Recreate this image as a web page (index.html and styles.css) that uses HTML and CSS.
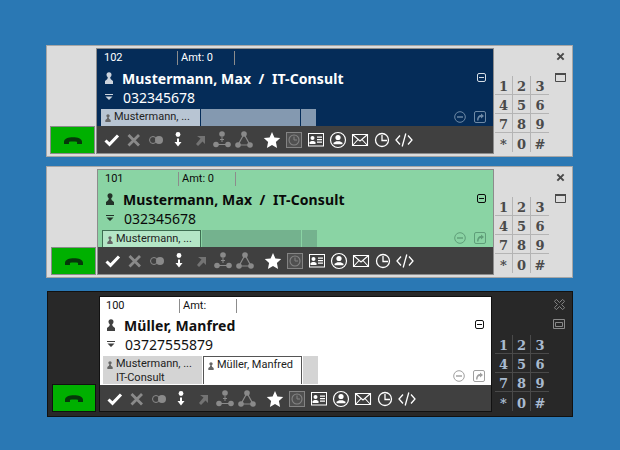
FILE: index.html
```html
<!DOCTYPE html>
<html lang="en">
<head>
    <meta charset="UTF-8">
    <meta name="viewport" content="width=device-width, initial-scale=1.0">
    <title>Call windows</title>
    <link rel="stylesheet" href="styles.css">
</head>
<body>
    <!-- icon sprite, used by all three call windows -->
    <svg class="sprite" aria-hidden="true">
        <symbol id="i-phone" viewBox="0 0 22 10"><path d="M1 6.500C1 3 6 1.500 11 1.500S21 3 21 6.500V9h-5.500V6.500c-1.500-.7-7.500-.7-9 0V9H1z"/></symbol>
        <symbol id="i-person" viewBox="0 0 8 12"><circle cx="4" cy="2.800" r="2.500"/><path d="M2.800 5h2.400l.4 2L8 9v3H0V9l2.400-2z"/></symbol>
        <symbol id="i-filter" viewBox="0 0 8 6"><path d="M0 0h8v1H0zM.5 2.500h7L4 6z"/></symbol>
        <symbol id="i-check" viewBox="0 0 22 22"><path d="M4.500 11.500l4 3.800L17 6.500" fill="none" stroke="currentColor" stroke-width="3"/></symbol>
        <symbol id="i-x" viewBox="0 0 22 22"><path d="M5.500 6l10.500 10.500M16 6L5.500 16.500" fill="none" stroke="currentColor" stroke-width="2.800"/></symbol>
        <symbol id="i-toggle" viewBox="0 0 22 22"><circle cx="8" cy="11" r="3.500" fill="none" stroke="currentColor"/><circle cx="14" cy="11" r="4"/></symbol>
        <symbol id="i-down" viewBox="0 0 22 22"><circle cx="11" cy="5.500" r="2.400"/><path d="M10 9.500h2v3.500h2.500L11 17.500 7.500 13H10z"/></symbol>
        <symbol id="i-arrow" viewBox="0 0 22 22"><path d="M8 7h8v8l-2.500-2.500L9 17l-2-2 4.500-5.500z"/></symbol>
        <symbol id="i-merge" viewBox="0 0 22 22"><circle cx="11" cy="5" r="2.800"/><circle cx="5" cy="15.500" r="2.800"/><circle cx="17" cy="15.500" r="2.800"/><path d="M5 15h12v1H5zM10.500 8h1v2H13v1h-1.500v2h-1v-2H9v-1h1.500z"/></symbol>
        <symbol id="i-triangle" viewBox="0 0 22 22"><circle cx="11" cy="5" r="2.800"/><circle cx="5" cy="16" r="2.800"/><circle cx="17" cy="16" r="2.800"/><path d="M11 5L5 16h12z" fill="none" stroke="currentColor" stroke-width="1.200"/></symbol>
        <symbol id="i-star" viewBox="0 0 22 22"><path d="M11 3l2.400 5.400 5.800.7-4.300 4 1.200 5.900-5.100-2.900L5.900 19l1.200-5.900-4.300-4 5.800-.7z"/></symbol>
        <symbol id="i-clockbox" viewBox="0 0 22 22"><rect x="3.500" y="3.500" width="15" height="15" fill="#505050" stroke="#848484"/><circle cx="11" cy="11" r="5" fill="none" stroke="#848484" stroke-width="1.100"/><path d="M11 7.500V11h3" fill="none" stroke="#848484"/></symbol>
        <symbol id="i-card" viewBox="0 0 22 22"><rect x="3.500" y="4.500" width="15" height="12.500" fill="#404040" stroke="currentColor"/><circle cx="7.500" cy="9" r="2"/><path d="M4.500 15v-2l2-1h2l2 1v2zM12 7.500h5v1.200h-5zM12 10h5v1.200h-5zM12 12.500h5v1.200h-5z"/></symbol>
        <symbol id="i-user" viewBox="0 0 22 22"><circle cx="11" cy="11" r="7.500" fill="none" stroke="currentColor" stroke-width="1.200"/><circle cx="11" cy="8.500" r="2.600"/><path d="M6.500 15.200v-1.400l2.800-1.600h3.400l2.800 1.600v1.400z"/></symbol>
        <symbol id="i-mail" viewBox="0 0 22 22"><path d="M3.500 5.500h15v11h-15zM3.500 5.500L11 12l7.500-6.500M3.500 16.500L9 10.500M18.500 16.500L13 10.500" fill="none" stroke="currentColor" stroke-width="1.100"/></symbol>
        <symbol id="i-clock" viewBox="0 0 22 22"><circle cx="11" cy="11" r="6.500" fill="none" stroke="currentColor" stroke-width="1.300"/><path d="M11 6v5.500h5" fill="none" stroke="currentColor" stroke-width="1.300"/></symbol>
        <symbol id="i-code" viewBox="0 0 22 22"><path d="M7 6.500L3 11l4 4.500M15 6.500l4 4.500-4 4.500M12.800 4.500L9.200 17.500" fill="none" stroke="currentColor" stroke-width="1.300"/></symbol>
        <symbol id="i-collapse" viewBox="0 0 9 9"><rect x=".5" y=".5" width="8" height="8" rx="1.500" fill="none" stroke="currentColor"/><path d="M2 4h5v1H2z"/></symbol>
        <symbol id="i-remove" viewBox="0 0 12 12"><circle cx="6" cy="6" r="5.300" fill="none" stroke="currentColor"/><path d="M3 5.300h6v1.400H3z"/></symbol>
        <symbol id="i-forward" viewBox="0 0 12 12"><rect x=".5" y=".5" width="11" height="11" rx="1.500" fill="none" stroke="currentColor"/><path d="M7 2.500L10 5 7 7.500V6C5.500 6 4.500 7 4.500 9.500H3C3 6 4.500 4 7 4z"/></symbol>
        <symbol id="i-close" viewBox="0 0 10 10"><path d="M1.500 1.500l7 7M8.500 1.500l-7 7" fill="none" stroke="currentColor" stroke-width="2.200"/></symbol>
        <symbol id="i-close-outline" viewBox="0 0 14 14"><path d="M3 .5L7 4.500l4-4L13.500 3l-4 4 4 4-2.500 2.500-4-4-4 4L.5 11l4-4-4-4z" fill="none" stroke="currentColor" stroke-width="1.200"/></symbol>
        <symbol id="i-max" viewBox="0 0 11 9"><path d="M.5.500h10v8H.5z" fill="none" stroke="currentColor"/><path d="M0 0h11v2H0z"/></symbol>
        <symbol id="i-max-outline" viewBox="0 0 12 10"><path d="M.5.500h11v9H.5zM2.500 3.500h7v4h-7z" fill="none" stroke="currentColor"/></symbol>
    </svg>

    <section class="win win-blue">
        <div class="win-left">
            <button class="call"><svg><use href="#i-phone"/></svg></button>
        </div>
        <div class="panel">
            <div class="info">
                <div class="status"><span class="ext">102</span><span class="amt">Amt: 0</span></div>
                <div class="name-row">
                    <svg class="row-icon person"><use href="#i-person"/></svg>
                    <strong class="name">Mustermann, Max  /  IT-Consult</strong>
                    <svg class="collapse"><use href="#i-collapse"/></svg>
                </div>
                <div class="number-row">
                    <svg class="row-icon filter"><use href="#i-filter"/></svg>
                    <span class="number">032345678</span>
                </div>
                <div class="tabs">
                    <div class="tab active"><svg><use href="#i-person"/></svg><span>Mustermann, ...</span></div>
                    <div class="tab empty"></div>
                    <div class="tab stub"></div>
                    <svg class="tab-action remove"><use href="#i-remove"/></svg>
                    <svg class="tab-action"><use href="#i-forward"/></svg>
                </div>
            </div>
            <div class="toolbar">
                <svg class="on"><use href="#i-check"/></svg>
                <svg class="off"><use href="#i-x"/></svg>
                <svg class="off"><use href="#i-toggle"/></svg>
                <svg class="on"><use href="#i-down"/></svg>
                <svg class="dim"><use href="#i-arrow"/></svg>
                <svg class="off"><use href="#i-merge"/></svg>
                <svg class="off"><use href="#i-triangle"/></svg>
                <svg class="on star"><use href="#i-star"/></svg>
                <svg class="off"><use href="#i-clockbox"/></svg>
                <svg class="on"><use href="#i-card"/></svg>
                <svg class="on"><use href="#i-user"/></svg>
                <svg class="on"><use href="#i-mail"/></svg>
                <svg class="on"><use href="#i-clock"/></svg>
                <svg class="on"><use href="#i-code"/></svg>
            </div>
        </div>
        <div class="keypad">
            <span>1</span><span>2</span><span>3</span>
            <span>4</span><span>5</span><span>6</span>
            <span>7</span><span>8</span><span>9</span>
            <span>*</span><span>0</span><span>#</span>
        </div>
        <div class="win-ctl">
            <svg class="ctl-close"><use href="#i-close"/></svg>
            <svg class="ctl-max"><use href="#i-max"/></svg>
        </div>
    </section>

    <section class="win win-green">
        <div class="win-left">
            <button class="call"><svg><use href="#i-phone"/></svg></button>
        </div>
        <div class="panel">
            <div class="info">
                <div class="status"><span class="ext">101</span><span class="amt">Amt: 0</span></div>
                <div class="name-row">
                    <svg class="row-icon person"><use href="#i-person"/></svg>
                    <strong class="name">Mustermann, Max  /  IT-Consult</strong>
                    <svg class="collapse"><use href="#i-collapse"/></svg>
                </div>
                <div class="number-row">
                    <svg class="row-icon filter"><use href="#i-filter"/></svg>
                    <span class="number">032345678</span>
                </div>
                <div class="tabs">
                    <div class="tab active"><svg><use href="#i-person"/></svg><span>Mustermann, ...</span></div>
                    <div class="tab empty"></div>
                    <div class="tab stub"></div>
                    <svg class="tab-action remove"><use href="#i-remove"/></svg>
                    <svg class="tab-action"><use href="#i-forward"/></svg>
                </div>
            </div>
            <div class="toolbar">
                <svg class="on"><use href="#i-check"/></svg>
                <svg class="off"><use href="#i-x"/></svg>
                <svg class="off"><use href="#i-toggle"/></svg>
                <svg class="on"><use href="#i-down"/></svg>
                <svg class="dim"><use href="#i-arrow"/></svg>
                <svg class="off"><use href="#i-merge"/></svg>
                <svg class="off"><use href="#i-triangle"/></svg>
                <svg class="on star"><use href="#i-star"/></svg>
                <svg class="off"><use href="#i-clockbox"/></svg>
                <svg class="on"><use href="#i-card"/></svg>
                <svg class="on"><use href="#i-user"/></svg>
                <svg class="on"><use href="#i-mail"/></svg>
                <svg class="on"><use href="#i-clock"/></svg>
                <svg class="on"><use href="#i-code"/></svg>
            </div>
        </div>
        <div class="keypad">
            <span>1</span><span>2</span><span>3</span>
            <span>4</span><span>5</span><span>6</span>
            <span>7</span><span>8</span><span>9</span>
            <span>*</span><span>0</span><span>#</span>
        </div>
        <div class="win-ctl">
            <svg class="ctl-close"><use href="#i-close"/></svg>
            <svg class="ctl-max"><use href="#i-max"/></svg>
        </div>
    </section>

    <section class="win win-dark">
        <div class="win-left">
            <button class="call"><svg><use href="#i-phone"/></svg></button>
        </div>
        <div class="panel">
            <div class="info">
                <div class="status"><span class="ext">100</span><span class="amt">Amt:</span></div>
                <div class="name-row">
                    <svg class="row-icon person"><use href="#i-person"/></svg>
                    <strong class="name">Müller, Manfred</strong>
                    <svg class="collapse"><use href="#i-collapse"/></svg>
                </div>
                <div class="number-row">
                    <svg class="row-icon filter"><use href="#i-filter"/></svg>
                    <span class="number">03727555879</span>
                </div>
                <div class="tabs">
                    <div class="tab idle"><svg><use href="#i-person"/></svg><span>Mustermann, ...<br>IT-Consult</span></div>
                    <div class="tab active"><svg><use href="#i-person"/></svg><span>Müller, Manfred</span></div>
                    <div class="tab stub"></div>
                    <svg class="tab-action remove"><use href="#i-remove"/></svg>
                    <svg class="tab-action"><use href="#i-forward"/></svg>
                </div>
            </div>
            <div class="toolbar">
                <svg class="on"><use href="#i-check"/></svg>
                <svg class="off"><use href="#i-x"/></svg>
                <svg class="off"><use href="#i-toggle"/></svg>
                <svg class="on"><use href="#i-down"/></svg>
                <svg class="dim"><use href="#i-arrow"/></svg>
                <svg class="off"><use href="#i-merge"/></svg>
                <svg class="off"><use href="#i-triangle"/></svg>
                <svg class="on star"><use href="#i-star"/></svg>
                <svg class="off"><use href="#i-clockbox"/></svg>
                <svg class="on"><use href="#i-card"/></svg>
                <svg class="on"><use href="#i-user"/></svg>
                <svg class="on"><use href="#i-mail"/></svg>
                <svg class="on"><use href="#i-clock"/></svg>
                <svg class="on"><use href="#i-code"/></svg>
            </div>
        </div>
        <div class="keypad">
            <span>1</span><span>2</span><span>3</span>
            <span>4</span><span>5</span><span>6</span>
            <span>7</span><span>8</span><span>9</span>
            <span>*</span><span>0</span><span>#</span>
        </div>
        <div class="win-ctl">
            <svg class="ctl-close"><use href="#i-close-outline"/></svg>
            <svg class="ctl-max"><use href="#i-max-outline"/></svg>
        </div>
    </section>
</body>
</html>
```

FILE: styles.css
```css
body {
    font-family: "Noto Sans", sans-serif;
    margin: 0;
    padding: 45px 0 0 46px;
    background: #2a78b4;
    color: #111;
    height: 405px;
    overflow: hidden;
}

svg {
    fill: currentColor;
    display: block;
}

.sprite {
    position: absolute;
    width: 0;
    height: 0;
}

/* window shell */
.win {
    display: flex;
    box-sizing: border-box;
    width: 527px;
    height: 112px;
    padding: 2px 0 2px 2px;
    margin-bottom: 9px;
    border: 1px solid #a6a6a6;
    background: #dcdcdc;
}

.win-left {
    display: flex;
    align-items: flex-end;
    width: 47px;
    padding-left: 1px;
    box-sizing: border-box;
}

.call {
    display: flex;
    align-items: center;
    justify-content: center;
    width: 45px;
    height: 28px;
    padding: 0;
    border: 1px solid #8a8a8a;
    background: #00b000;
}

.call svg {
    width: 20px;
    height: 9px;
    color: #06380a;
}

.panel {
    display: flex;
    flex-direction: column;
    box-sizing: border-box;
    width: 398px;
    border: 1px solid #8c8c8c;
}

.info {
    flex: 1;
    display: flex;
    flex-direction: column;
    padding-left: 4px;
    min-height: 0;
}

.status {
    display: flex;
    height: 14px;
    margin-top: 2px;
    font-family: Roboto, sans-serif;
    font-size: 11px;
    line-height: 14px;
}

.ext {
    width: 73px;
    padding-left: 3px;
    border-right: 1px solid #8c8c8c;
}

.amt {
    width: 53px;
    padding-left: 3px;
    border-right: 1px solid #8c8c8c;
}

.name-row {
    display: flex;
    align-items: center;
    height: 20px;
    margin-top: 3px;
}

.row-icon {
    margin-left: 4px;
    opacity: .8;
}

.person {
    width: 8px;
    height: 12px;
}

.name {
    flex: 1;
    margin-left: 9px;
    font-size: 14px;
    letter-spacing: .1px;
    white-space: pre;
}

.collapse {
    width: 9px;
    height: 9px;
    margin: 0 7px 1px 0;
}

.number-row {
    display: flex;
    align-items: center;
    height: 18px;
}

.filter {
    width: 8px;
    height: 6px;
}

.number {
    margin-left: 10px;
    font-size: 14px;
}

.tabs {
    display: flex;
    flex: 1;
    align-items: stretch;
    margin-top: 3px;
    min-height: 0;
}

.tab {
    display: flex;
    box-sizing: border-box;
    padding-top: 1px;
    font-family: Roboto, sans-serif;
    font-size: 11px;
    line-height: 14px;
    color: #222;
}

.tab svg {
    flex: none;
    width: 6px;
    height: 8px;
    margin: 4px 3px 0 4px;
    color: #666;
}

.tab.active,
.tab.empty,
.tab.idle {
    width: 99px;
    margin-right: 1px;
}

.tab.stub {
    width: 15px;
}

.tab-action {
    align-self: flex-end;
    width: 12px;
    height: 12px;
    margin: 0 0 3px 8px;
    color: #6f8aa6;
}

.remove {
    margin-left: auto;
}

.tab-action:last-child {
    margin-right: 7px;
}

/* toolbar */
.toolbar {
    display: flex;
    align-items: center;
    height: 27px;
    padding-left: 4px;
    background: #404040;
    flex: none;
}

.toolbar svg {
    flex: none;
    width: 22px;
    height: 22px;
}

.toolbar .star {
    margin-left: 6px;
}

.on {
    color: #fff;
}

.off {
    color: #8a8a8a;
}

.dim {
    color: #737373;
}

/* keypad */
.keypad {
    display: grid;
    grid-template-columns: repeat(3, 18px);
    grid-auto-rows: 19px;
    align-self: flex-end;
    margin: 0 0 2px 1px;
    font-family: "DejaVu Serif", serif;
    font-weight: bold;
    font-size: 13px;
    color: #4a4a4a;
}

.keypad span {
    box-sizing: border-box;
    display: flex;
    align-items: center;
    justify-content: center;
    padding-top: 3px;
    border-right: 1px solid #b4b4b4;
    border-bottom: 1px solid #b4b4b4;
}

.keypad span:nth-child(3n) {
    border-right: 0;
}

.keypad span:nth-last-child(-n+3) {
    border-bottom: 0;
}

.win-ctl {
    display: flex;
    flex-direction: column;
    align-items: center;
    flex: 1;
    padding-top: 4px;
    color: #4a4a4a;
}

.ctl-close {
    width: 9px;
    height: 9px;
}

.ctl-max {
    width: 11px;
    height: 9px;
    margin-top: 12px;
}

/* blue window */
.win-blue .info {
    background: #052c58;
    color: #fff;
}

.win-blue .tab.active {
    background: #b8c5d3;
}

.win-blue .tab.empty,
.win-blue .tab.stub {
    background: #8499b0;
}

.win-blue .collapse {
    color: #d6dde5;
}

/* green window */
.win-green {
    padding-left: 3px;
}

.win-green .panel {
    width: 397px;
}

.win-green .info {
    background: #8ad4a4;
    color: #0a0a0a;
}

.win-green .tab.active {
    background: #b4e6c6;
    border: 1px solid #3e6e52;
    border-bottom: 0;
}

.win-green .tab.empty,
.win-green .tab.stub {
    background: #74b28e;
}

.win-green .tab-action {
    color: #5f9e79;
}

/* dark window */
.win-dark {
    width: 526px;
    height: 126px;
    margin: 13px 0 0 1px;
    padding: 4px 0 4px 4px;
    border-color: #111;
    background: #282828;
}

.win-dark .win-left {
    width: 47px;
    padding-left: 0;
}

.win-dark .call {
    width: 44px;
    border-color: #111;
}

.win-dark .panel {
    width: 393px;
    border-color: #111;
}

.win-dark .info {
    padding-left: 3px;
    background: #fff;
    color: #111;
}

.win-dark .name-row {
    margin-top: 2px;
}

.win-dark .tabs {
    margin-bottom: 1px;
}

.win-dark .toolbar {
    box-sizing: border-box;
    height: 26px;
    padding-top: 1px;
}

.win-dark .tab.idle,
.win-dark .tab.stub {
    background: #d4d4d4;
}

.win-dark .tab.active {
    border: 1px solid #555;
    border-bottom: 0;
    background: #fff;
}

.win-dark .tab-action {
    margin-bottom: 2px;
    color: #a0a0a0;
}

.win-dark .tab-action:last-child {
    margin-right: 6px;
}

.win-dark .keypad {
    margin: 0 0 1px 3px;
    color: #a9bbd0;
}

.win-dark .keypad span {
    border-color: #4a4a4a;
}

.win-dark .win-ctl {
    padding: 3px 3px 0 0;
    color: #8a8a8a;
}

.win-dark .ctl-close {
    width: 11px;
    height: 11px;
}

.win-dark .ctl-max {
    width: 12px;
    height: 10px;
    margin-top: 9px;
}
```
